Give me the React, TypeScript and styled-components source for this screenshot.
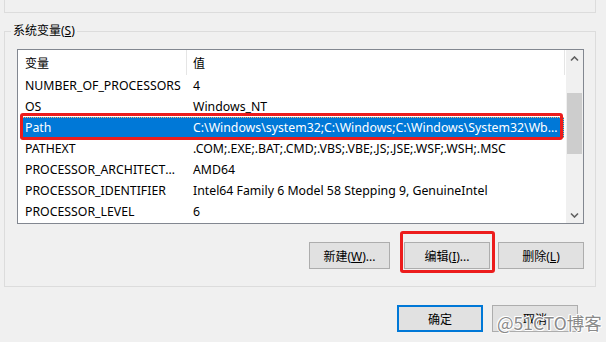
import * as React from 'react';
import styled, { createGlobalStyle } from 'styled-components';

const GlobalStyles = createGlobalStyle`
  body {
    margin: 0;
    background: #f0f0f0;
    color: #000;
    font-family: "Noto Sans", "Noto Sans CJK SC", sans-serif;
    font-size: 12.3px;
  }
`;

const Page = styled.div`
  position: relative;
  width: 606px;
  height: 342px;
  overflow: hidden;
  box-sizing: border-box;
  padding-left: 4px;
  background: #f0f0f0;
`;

const Column = styled.div`
  width: 592px;
  display: flex;
  flex-direction: column;
`;

const GroupTail = styled.div`
  height: 12px;
  border: 1px solid #dcdcdc;
  border-top: none;
`;

const Group = styled.fieldset`
  margin: 10px 0 0;
  padding: 10px 11px 17px 12px;
  border: 1px solid #dcdcdc;
  min-width: 0;
`;

const Legend = styled.legend`
  margin-left: -6px;
  padding: 0 2px;
  line-height: 16px;
  font-size: 12px;
`;

const ListBox = styled.div`
  position: relative;
  height: 175px;
  box-sizing: border-box;
  border: 1px solid #828790;
  background: #fff;
  display: flex;
`;

const Table = styled.div`
  flex: 1;
  min-width: 0;
  display: flex;
  flex-direction: column;
`;

const Header = styled.div`
  height: 25px;
  display: flex;
`;

const HeaderCell = styled.div<{ $w: number; $pad: number }>`
  width: ${p => p.$w}px;
  box-sizing: border-box;
  padding-left: ${p => p.$pad}px;
  border-right: 1px solid #e5e5e5;
  display: flex;
  align-items: center;
  font-size: 12px;
`;

const Row = styled.div<{ $selected?: boolean }>`
  height: 21px;
  margin: 0 2px;
  display: flex;
  align-items: center;
  box-sizing: border-box;
  overflow: hidden;
  white-space: nowrap;
  background: ${p => (p.$selected ? '#0078d7' : 'transparent')};
  color: ${p => (p.$selected ? '#fff' : '#000')};
  border: 1px dotted ${p => (p.$selected ? '#f6b26b' : 'transparent')};
`;

const Cell = styled.div<{ $w?: number; $pad: number; $padRight?: number }>`
  ${p => (p.$w ? `width: ${p.$w}px; flex: none;` : 'flex: 1; min-width: 0;')}
  box-sizing: border-box;
  padding-left: ${p => p.$pad}px;
  padding-right: ${p => p.$padRight ?? 0}px;
  overflow: hidden;
  white-space: nowrap;
  text-overflow: ellipsis;
`;

const Scrollbar = styled.div`
  width: 17px;
  flex: none;
  background: #f0f0f0;
  display: flex;
  flex-direction: column;
`;

const ArrowBox = styled.div`
  height: 17px;
  display: flex;
  align-items: center;
  justify-content: center;
`;

const Track = styled.div`
  flex: 1;
  padding-top: 26px;
`;

const Thumb = styled.div`
  height: 61px;
  margin: 0 1px;
  background: #cdcdcd;
`;

const Marker = styled.span<{ $t: number; $l: number; $r: number; $b: number }>`
  position: absolute;
  top: ${p => p.$t}px;
  left: ${p => p.$l}px;
  right: ${p => p.$r}px;
  bottom: ${p => p.$b}px;
  border: 3px solid #ec1c1c;
  border-radius: 3px;
  pointer-events: none;
`;

const ButtonRow = styled.div<{ $right?: number }>`
  display: flex;
  justify-content: flex-end;
  margin-top: 18px;
  margin-right: ${p => p.$right ?? 0}px;
`;

const Button = styled.button<{ $w: number; $gap?: number; $default?: boolean }>`
  position: relative;
  width: ${p => p.$w}px;
  height: 27px;
  margin: 0 ${p => p.$gap ?? 0}px 0 0;
  padding: 0;
  box-sizing: border-box;
  background: #e1e1e1;
  border: ${p => (p.$default ? '2px solid #0078d7' : '1px solid #adadad')};
  font-family: "Noto Sans", "Noto Sans CJK SC", sans-serif;
  font-size: 12px;
  color: #000;
`;

const Watermark = styled.div`
  position: absolute;
  left: 497px;
  top: 312px;
  font-family: "Noto Sans CJK SC", sans-serif;
  font-size: 17.5px;
  line-height: 22px;
  color: #8a8a8a;
  text-shadow: 1px 0 #fff, -1px 0 #fff, 0 1px #fff, 0 -1px #fff, 1px 1px #fff, -1px -1px #fff;
  white-space: nowrap;
`;

const Chevron: React.FC<{ down?: boolean }> = ({ down }) => (
  <svg width="9" height="6" viewBox="0 0 9 6">
    <path
      d={down ? 'M1 1.5 L4.5 5 L8 1.5' : 'M1 4.5 L4.5 1 L8 4.5'}
      fill="none"
      stroke="#606060"
      strokeWidth="1.6"
    />
  </svg>
);

const rows = [
  ['NUMBER_OF_PROCESSORS', '4'],
  ['OS', 'Windows_NT'],
  ['Path', 'C:\\Windows\\system32;C:\\Windows;C:\\Windows\\System32\\Wbem;C:\\Windows\\System32\\WindowsPowerShell'],
  ['PATHEXT', '.COM;.EXE;.BAT;.CMD;.VBS;.VBE;.JS;.JSE;.WSF;.WSH;.MSC'],
  ['PROCESSOR_ARCHITECTURE', 'AMD64'],
  ['PROCESSOR_IDENTIFIER', 'Intel64 Family 6 Model 58 Stepping 9, GenuineIntel'],
  ['PROCESSOR_LEVEL', '6'],
];

const App: React.FC = () => (
  <>
    <GlobalStyles />
    <Page>
      <Column>
        <GroupTail />
        <Group>
          <Legend>
            系统变量(<u>S</u>)
          </Legend>
          <ListBox>
            <Table>
              <Header>
                <HeaderCell $w={169} $pad={7}>变量</HeaderCell>
                <HeaderCell $w={378} $pad={6}>值</HeaderCell>
              </Header>
              {rows.map(([name, value], i) => (
                <Row key={name} $selected={i === 2}>
                  <Cell $w={167} $pad={4} $padRight={6}>{name}</Cell>
                  <Cell $pad={5} $padRight={4}>{value}</Cell>
                </Row>
              ))}
            </Table>
            <Scrollbar>
              <ArrowBox>
                <Chevron />
              </ArrowBox>
              <Track>
                <Thumb />
              </Track>
              <ArrowBox>
                <Chevron down />
              </ArrowBox>
            </Scrollbar>
            <Marker $t={63} $l={2} $r={20} $b={83} />
          </ListBox>
          <ButtonRow>
            <Button $w={81} $gap={14}>
              新建(<u>W</u>)...
            </Button>
            <Button $w={86} $gap={8}>
              编辑(<u>I</u>)...
              <Marker $t={-12} $l={-5} $r={-6} $b={-5} />
            </Button>
            <Button $w={86}>
              删除(<u>L</u>)
            </Button>
          </ButtonRow>
        </Group>
        <ButtonRow $right={18}>
          <Button $w={86} $gap={9} $default>
            确定
          </Button>
          <Button $w={86}>取消</Button>
        </ButtonRow>
      </Column>
      <Watermark>@51CTO博客</Watermark>
    </Page>
  </>
);

export default App;
